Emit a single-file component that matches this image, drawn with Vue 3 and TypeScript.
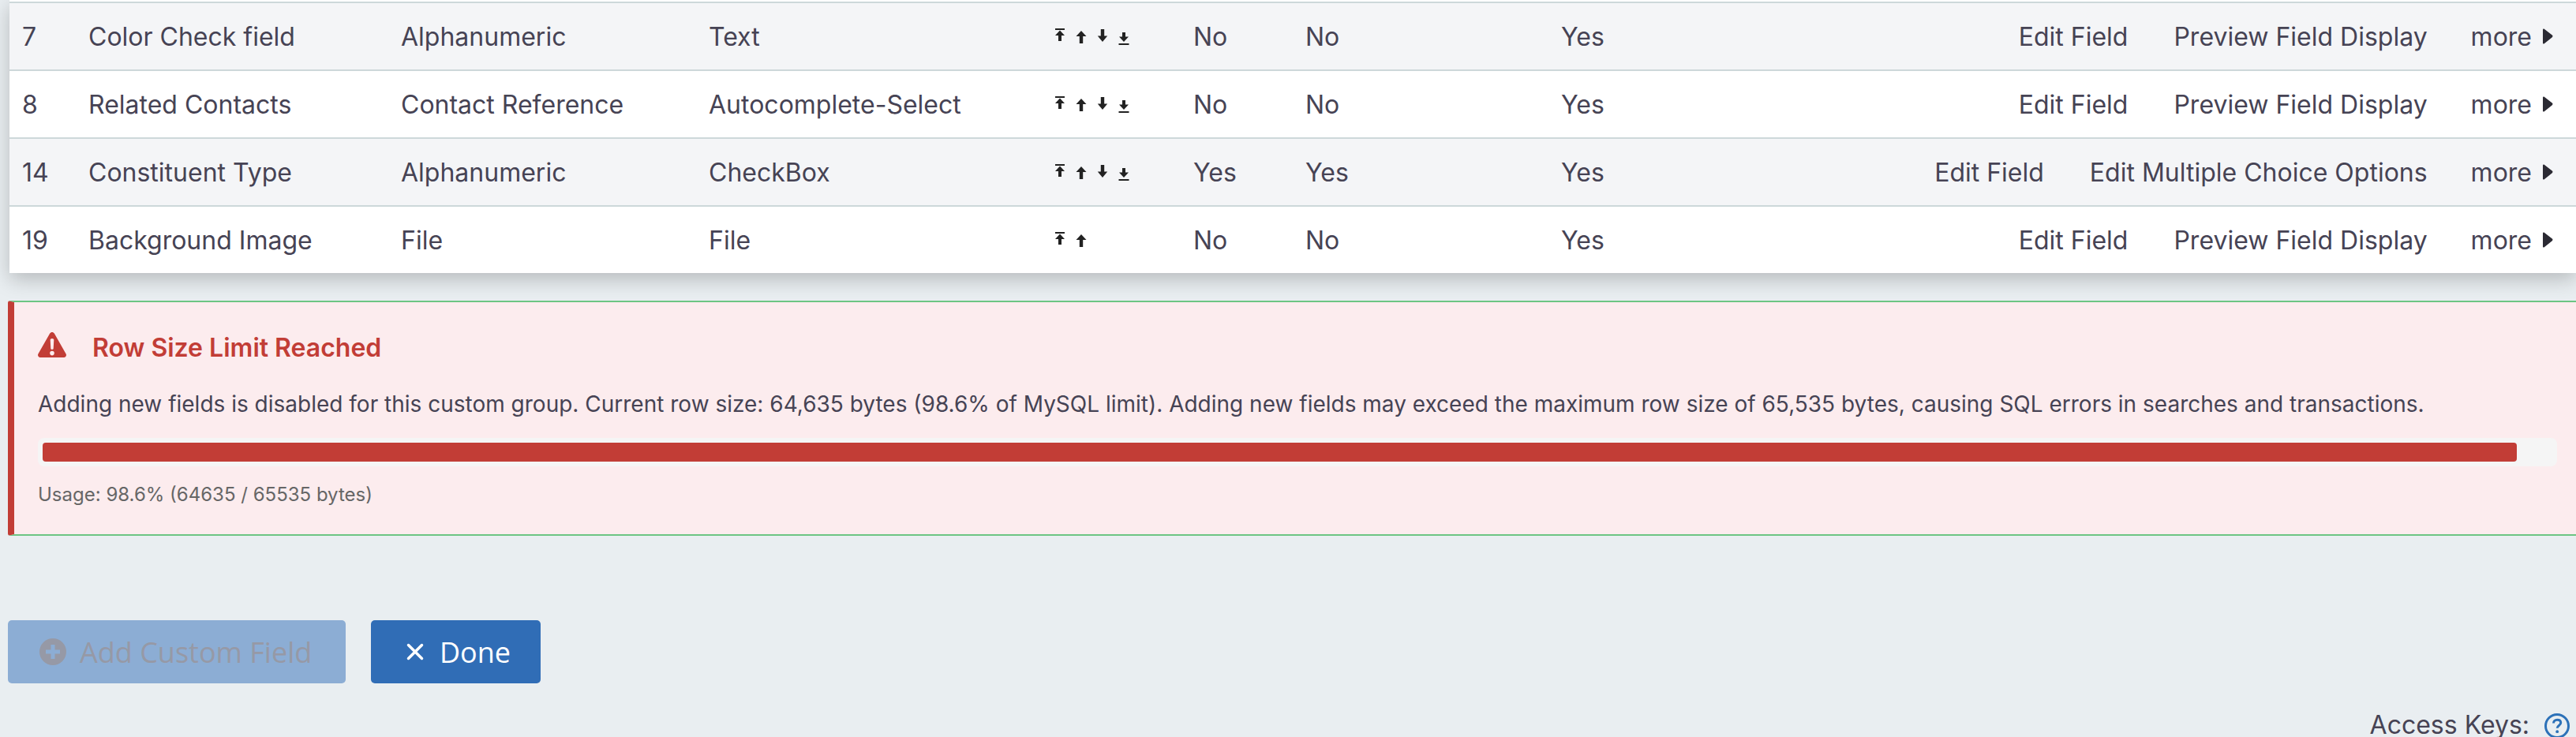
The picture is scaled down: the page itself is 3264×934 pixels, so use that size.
<template>
  <div class="page">
    <div class="table-wrap">
      <table class="fields">
        <colgroup>
          <col class="c-id" />
          <col class="c-label" />
          <col class="c-type" />
          <col class="c-html" />
          <col class="c-order" />
          <col class="c-req" />
          <col class="c-search" />
          <col class="c-enabled" />
          <col />
        </colgroup>
        <tbody>
          <tr v-for="(row, i) in rows" :key="row.id" :class="{ odd: i % 2 === 0 }">
            <td>{{ row.id }}</td>
            <td>{{ row.label }}</td>
            <td>{{ row.type }}</td>
            <td>{{ row.html }}</td>
            <td class="order-cell">
              <div class="order">
                <svg viewBox="0 0 14 26" class="arrow"><path d="M1 3h12v2H1zM7 5.500l6 6.500H9v7H5v-7H1z" /></svg>
                <svg viewBox="0 0 14 26" class="arrow"><path d="M7 6l6.500 7H9.200v9H4.800v-9H.5z" /></svg>
                <template v-if="!row.last">
                  <svg viewBox="0 0 14 26" class="arrow"><path d="M4.800 4h4.400v8.500h4L7 20 .8 12.500h4z" /></svg>
                  <svg viewBox="0 0 14 26" class="arrow"><path d="M5 8h4v5.500h4L7 20 1 13.500h4zM.5 22h13v2H.5z" /></svg>
                </template>
              </div>
            </td>
            <td>{{ row.required }}</td>
            <td>{{ row.searchable }}</td>
            <td>Yes</td>
            <td class="links-cell">
              <div class="links">
                <span>Edit Field</span>
                <span>{{ row.action }}</span>
                <span class="more">more
                  <svg viewBox="0 0 14 20" class="caret"><path d="M1 1.500c0-1 1-1.300 1.800-.7l10 7.800c.9.700.9 2 0 2.700l-10 7.900c-.8.600-1.800.2-1.800-.8z" /></svg>
                </span>
              </div>
            </td>
          </tr>
        </tbody>
      </table>
    </div>

    <div class="alert">
      <div class="alert-head">
        <svg viewBox="0 0 36 32" class="warn">
          <path fill-rule="evenodd" d="M18 0c1.200 0 2.200.6 2.800 1.600l14.800 26c1.100 2-.3 4.400-2.600 4.400H3c-2.300 0-3.700-2.400-2.600-4.400l14.800-26C15.800.6 16.800 0 18 0zm-2.300 9.800.6 11c0 .7.700 1.200 1.700 1.200s1.700-.5 1.700-1.200l.6-11c0-1-1-1.800-2.300-1.800s-2.300.8-2.300 1.800zM18 23.800a2.800 2.800 0 1 0 0 5.600 2.800 2.800 0 0 0 0-5.600z" />
        </svg>
        <h3>Row Size Limit Reached</h3>
      </div>
      <p class="alert-text">
        Adding new fields is disabled for this custom group. Current row size: 64,635 bytes (98.6% of MySQL limit). Adding new fields may exceed the maximum row size of 65,535 bytes, causing SQL errors in searches and transactions.
      </p>
      <div class="track">
        <div class="fill" :style="{ width: usage + '%' }"></div>
      </div>
      <div class="usage">Usage: {{ usage }}% (64635 / 65535 bytes)</div>
    </div>

    <div class="actions">
      <button type="button" class="btn disabled">
        <svg viewBox="0 0 34 34" class="btn-plus">
          <path fill-rule="evenodd" d="M17 0a17 17 0 1 1 0 34 17 17 0 0 1 0-34zm-2.500 8v6.500H8v5h6.500V26h5v-6.500H26v-5h-6.500V8z" />
        </svg>
        Add Custom Field
      </button>
      <button type="button" class="btn done">
        <svg viewBox="0 0 22 22" class="btn-x">
          <path d="M2.500 2.500l17 17M19.500 2.500l-17 17" />
        </svg>
        Done
      </button>
    </div>

    <div class="access">
      <span class="access-label">Access Keys:</span>
      <svg viewBox="0 0 32 32" class="help">
        <circle cx="16" cy="16" r="14.500" />
        <path d="M11.500 12.500c0-2.700 2-4.300 4.700-4.300s4.500 1.500 4.500 3.900c0 3.400-4.500 3.500-4.500 6.700" />
        <circle class="dot" cx="16.200" cy="23.200" r="1.900" />
      </svg>
    </div>
  </div>
</template>

<script setup lang="ts">
interface FieldRow {
  id: number
  label: string
  type: string
  html: string
  required: string
  searchable: string
  action: string
  last?: boolean
}

const preview = 'Preview Field Display'
const usage = 98.6

const rows: FieldRow[] = [
  { id: 7, label: 'Color Check field', type: 'Alphanumeric', html: 'Text', required: 'No', searchable: 'No', action: preview },
  { id: 8, label: 'Related Contacts', type: 'Contact Reference', html: 'Autocomplete-Select', required: 'No', searchable: 'No', action: preview },
  { id: 14, label: 'Constituent Type', type: 'Alphanumeric', html: 'CheckBox', required: 'Yes', searchable: 'Yes', action: 'Edit Multiple Choice Options' },
  { id: 19, label: 'Background Image', type: 'File', html: 'File', required: 'No', searchable: 'No', action: preview, last: true },
]
</script>

<style scoped>
.page {
  height: 934px;
  overflow: hidden;
  font-family: Inter, "Liberation Sans", sans-serif;
  color: #464354;
}

.table-wrap {
  margin-left: 12px;
  padding-top: 2px;
  background: #ffffff;
  box-shadow: 0 8px 24px rgba(0, 0, 0, 0.22);
}

.fields {
  width: 100%;
  table-layout: fixed;
  border-collapse: separate;
  border-spacing: 0;
  font-size: 32px;
}

.c-id { width: 84px; }
.c-label { width: 396px; }
.c-type { width: 390px; }
.c-html { width: 438px; }
.c-order { width: 176px; }
.c-req { width: 142px; }
.c-search { width: 324px; }
.c-enabled { width: 302px; }

.fields td {
  height: 86px;
  box-sizing: border-box;
  padding: 0 0 0 16px;
  border-top: 2px solid #cdd8da;
  white-space: nowrap;
}

.fields tr.odd td {
  background: #f4f5f7;
}

.order {
  display: flex;
  gap: 13px;
}

.arrow {
  display: block;
  width: 14px;
  height: 26px;
  fill: #222222;
}

.fields td.links-cell {
  padding: 0 29px 0 0;
}

.links {
  display: flex;
  justify-content: flex-end;
  gap: 58px;
}

.more {
  display: flex;
  align-items: center;
  gap: 13px;
  margin-left: -3px;
}

.caret {
  width: 14px;
  height: 20px;
  fill: #2b2a33;
}

.alert {
  margin: 35px 0 0 10px;
  height: 298px;
  box-sizing: border-box;
  padding: 38px 24px 0 30px;
  background: #fcecee;
  border-top: 2px solid #6cc583;
  border-bottom: 2px solid #6cc583;
  border-left: 8px solid #c23d36;
  border-radius: 3px 0 0 3px;
}

.alert-head {
  display: flex;
  align-items: flex-start;
  gap: 33px;
}

.warn {
  width: 36px;
  height: 32px;
  fill: #c23d36;
}

.alert-head h3 {
  margin: 2px 0 0;
  font-size: 32px;
  line-height: 36px;
  font-weight: 600;
  color: #c23d36;
}

.alert-text {
  margin: 32px 0 0;
  font-size: 28px;
  line-height: 42px;
  white-space: nowrap;
}

.track {
  margin-top: 22px;
  height: 36px;
  box-sizing: border-box;
  padding: 6px;
  background: #f5f5f5;
  border-radius: 8px;
}

.fill {
  height: 24px;
  background: #c23d36;
  border-radius: 4px;
}

.usage {
  margin-top: 18px;
  font-size: 24px;
  line-height: 36px;
  color: #666666;
}

.actions {
  display: flex;
  gap: 32px;
  margin: 107px 0 0 10px;
}

.btn {
  display: flex;
  align-items: center;
  height: 80px;
  box-sizing: border-box;
  border: 0;
  border-radius: 5px;
  font-family: "Open Sans", "Noto Sans", sans-serif;
  font-size: 36px;
  font-weight: 500;
}

.btn.disabled {
  width: 428px;
  padding: 0 0 0 40px;
  gap: 17px;
  background: #8cadd4;
  color: #9699a6;
}

.btn-plus {
  width: 34px;
  height: 34px;
  fill: #9699a6;
}

.btn.done {
  width: 215px;
  padding: 0 0 0 45px;
  gap: 20px;
  background: #306db6;
  color: #ffffff;
}

.btn-x {
  width: 22px;
  height: 22px;
  fill: none;
  stroke: #ffffff;
  stroke-width: 3.500;
  stroke-linecap: round;
}

.access {
  display: flex;
  justify-content: flex-end;
  align-items: center;
  gap: 19px;
  margin-top: 33px;
  padding-right: 8px;
  font-size: 32px;
}

.access-label {
  margin-bottom: 3px;
}

.help {
  flex: none;
  width: 32px;
  height: 32px;
  fill: none;
  stroke: #2c71b8;
  stroke-width: 3;
}

.help .dot {
  fill: #2c71b8;
  stroke: none;
}
</style>

<style>
body {
  background: #e9eef1;
}
</style>
